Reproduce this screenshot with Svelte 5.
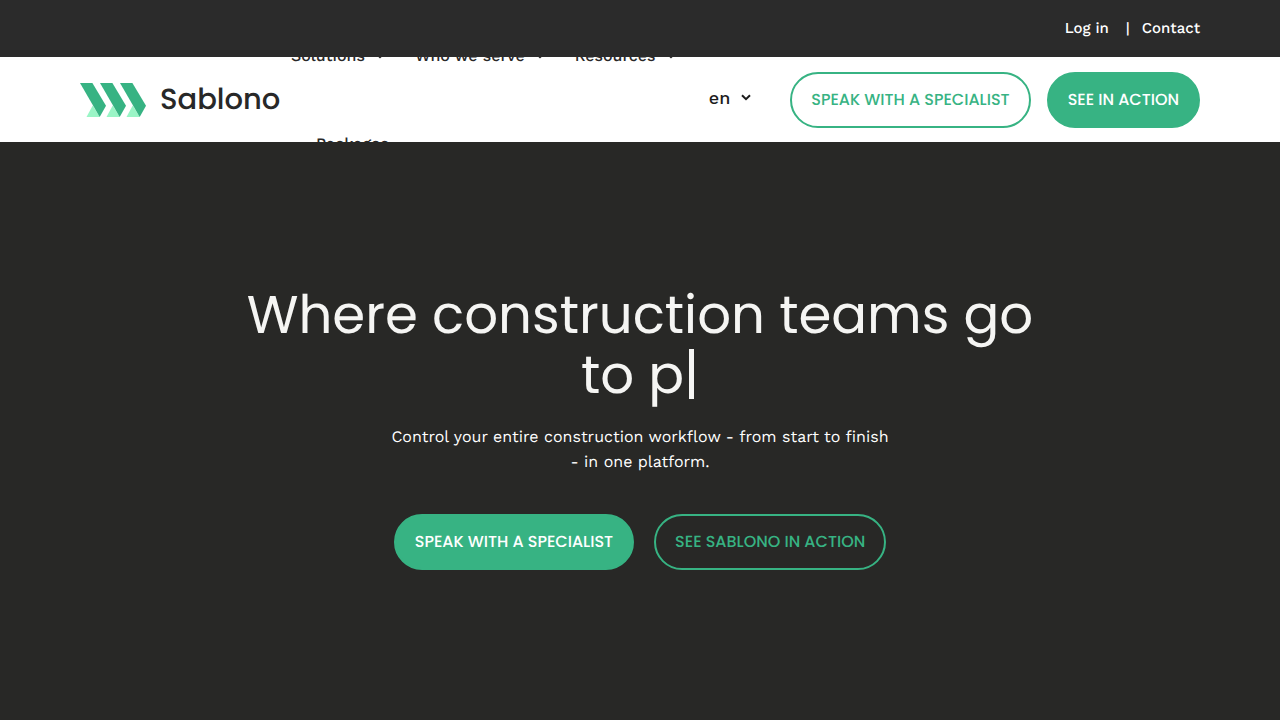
<script>
  const menu = ['Solutions', 'Who we serve', 'Resources'];
  const shards = [0, 20, 40];
  const typed = 'to p';
</script>

{#snippet chevron()}
  <svg class="chevron" viewBox="0 0 10 7" aria-hidden="true">
    <path d="M1 1.2 5 5.2 9 1.2" fill="none" stroke="currentColor" stroke-width="2" />
  </svg>
{/snippet}

<div class="page">
  <div class="topbar">
    <a href="#login">Log in</a>
    <span class="divider">|</span>
    <a href="#contact">Contact</a>
  </div>

  <header>
    <a class="logo" href="#home">
      <svg class="mark" viewBox="0 0 66 34" aria-hidden="true">
        {#each shards as x}
          <g transform="translate({x} 0)">
            <path d="M12.7 22.5 19.7 34H6.5Z" fill="#9af5c6" />
            <path d="M0 0H12.4L26 22.7 19.7 34Z" fill="#37b383" />
          </g>
        {/each}
      </svg>
      <span>Sablono</span>
    </a>

    <nav>
      {#each menu as item}
        <a href="#menu">{item}{@render chevron()}</a>
      {/each}
      <a class="packages" href="#packages">Packages</a>
    </nav>

    <button class="language" type="button">en {@render chevron()}</button>

    <div class="actions">
      <a class="btn outline" href="#specialist">SPEAK WITH A SPECIALIST</a>
      <a class="btn solid" href="#action">SEE IN ACTION</a>
    </div>
  </header>

  <main>
    <h1>Where construction teams go<br />{typed}<span class="caret"></span></h1>
    <p>Control your entire construction workflow - from start to finish<br />- in one platform.</p>
    <div class="cta">
      <a class="btn solid" href="#specialist">SPEAK WITH A SPECIALIST</a>
      <a class="btn outline" href="#action">SEE SABLONO IN ACTION</a>
    </div>
  </main>
</div>

<style>
  :global(body) {
    background: #282826;
  }
  .page {
    min-height: 100vh;
    display: flex;
    flex-direction: column;
    font-family: 'Work Sans', Inter, sans-serif;
    font-size: 16px;
    color: #282828;
    text-rendering: geometricPrecision;
  }
  a {
    color: inherit;
    text-decoration: none;
  }
  .topbar {
    display: flex;
    justify-content: flex-end;
    align-items: center;
    padding: 16px 80px;
    background: #2b2b2b;
    color: #fff;
    font-size: 15px;
    font-weight: 500;
    line-height: 25px;
  }
  .divider {
    margin: 0 12px 0 17px;
  }
  header {
    display: flex;
    align-items: center;
    height: 85px;
    padding: 0 80px;
    overflow: hidden;
    background: #fff;
  }
  .logo {
    display: flex;
    align-items: center;
    gap: 14px;
    width: 200px;
    flex: none;
    font-family: Poppins, Inter, sans-serif;
    font-size: 29px;
    font-weight: 500;
    line-height: 36px;
  }
  .mark {
    width: 66px;
    height: 34px;
    flex: none;
  }
  nav {
    flex: 1;
    min-width: 0;
    display: flex;
    flex-wrap: wrap;
    column-gap: 30px;
    padding-left: 11px;
    line-height: 88px;
    font-weight: 500;
  }
  nav a {
    display: flex;
    align-items: center;
    gap: 10px;
    white-space: nowrap;
  }
  .packages {
    padding-left: 25px;
  }
  .chevron {
    width: 10px;
    height: 7px;
    flex: none;
  }
  .language {
    display: flex;
    align-items: center;
    gap: 11px;
    margin: 0 39px 4px 16px;
    padding: 0;
    border: 0;
    background: none;
    color: #1c1c1c;
    font: 500 18px/24px 'Work Sans', Inter, sans-serif;
  }
  .actions {
    display: flex;
    gap: 16px;
    flex: none;
  }
  .btn {
    box-sizing: border-box;
    padding: 14px 19px;
    border: 2px solid #37b383;
    border-radius: 28px;
    font-family: Poppins, Inter, sans-serif;
    font-size: 16px;
    font-weight: 500;
    line-height: 24px;
    text-align: center;
    white-space: nowrap;
  }
  .solid {
    background: #37b383;
    color: #fff;
  }
  .outline {
    color: #37b383;
  }
  main {
    flex: 1;
    display: flex;
    flex-direction: column;
    align-items: center;
    justify-content: center;
    padding: 0 80px 7px;
    background: #282826;
    color: #fff;
    text-align: center;
  }
  h1 {
    margin: 0;
    font-family: Poppins, Inter, sans-serif;
    font-size: 53px;
    font-weight: 400;
    line-height: 60px;
    color: #f5f5f3;
  }
  .caret {
    display: inline-block;
    width: 5px;
    height: 50px;
    margin: 0 5px;
    vertical-align: -6px;
    background: currentColor;
  }
  p {
    margin: 19px 0 40px;
    line-height: 25px;
  }
  .cta {
    display: flex;
    gap: 20px;
  }
</style>
